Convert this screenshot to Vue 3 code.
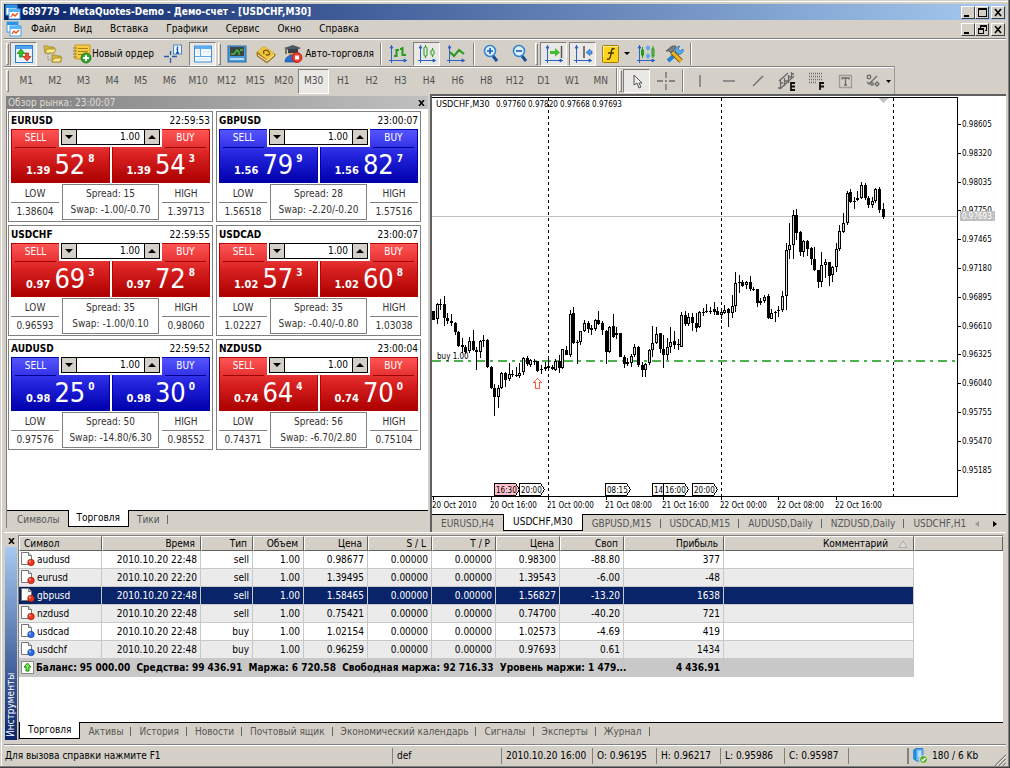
<script setup>
import { ref } from 'vue'

const menus = ['Файл', 'Вид', 'Вставка', 'Графики', 'Сервис', 'Окно', 'Справка']
const frames = ['M1', 'M2', 'M3', 'M4', 'M5', 'M6', 'M10', 'M12', 'M15', 'M20', 'M30', 'H1', 'H2', 'H3', 'H4', 'H6', 'H8', 'H12', 'D1', 'W1', 'MN']
const frame = ref('M30')

const quotes = [
  { s: 'EURUSD', t: '22:59:53', c: 'red', sell: ['1.39', '52', '8'], buy: ['1.39', '54', '3'], low: '1.38604', high: '1.39713', spread: '15', swap: '-1.00/-0.70' },
  { s: 'GBPUSD', t: '23:00:07', c: 'blue', sell: ['1.56', '79', '9'], buy: ['1.56', '82', '7'], low: '1.56518', high: '1.57516', spread: '28', swap: '-2.20/-0.20' },
  { s: 'USDCHF', t: '22:59:55', c: 'red', sell: ['0.97', '69', '3'], buy: ['0.97', '72', '8'], low: '0.96593', high: '0.98060', spread: '35', swap: '-1.00/0.10' },
  { s: 'USDCAD', t: '23:00:07', c: 'red', sell: ['1.02', '57', '3'], buy: ['1.02', '60', '8'], low: '1.02227', high: '1.03038', spread: '35', swap: '-0.40/-0.80' },
  { s: 'AUDUSD', t: '22:59:52', c: 'blue', sell: ['0.98', '25', '0'], buy: ['0.98', '30', '0'], low: '0.97576', high: '0.98552', spread: '50', swap: '-14.80/6.30' },
  { s: 'NZDUSD', t: '23:00:04', c: 'red', sell: ['0.74', '64', '4'], buy: ['0.74', '70', '0'], low: '0.74371', high: '0.75104', spread: '56', swap: '-6.70/2.80' }
].map(q => ({ ...q, vol: ref('1.00') }))

// Bars as "high low bodyTop bodyBottom direction" in thirds of a pixel
const early = `122 150 122 150 b,98 163 102 146 w,86 120 102 104 b,78 167 102 143 b,128 163 143 153 b,133 167 153 160 b,156 195 160 186 b,182 232 186 229 b,204 250 226 232 b,225 252 232 246 b,200 250 212 242 w,180 242 212 240 b,230 300 240 246 b,210 265 213 246 w,195 232 210 212 b,208 293 210 290 b,287 358 292 355 b,343 437 355 382 b,345 415 355 382 w,305 358 308 355 w,305 352 308 330 b,280 332 313 328 w,300 322 312 314 b,292 322 314 316 b,280 325 308 318 w,262 315 265 305 w,258 287 265 283 b,268 292 270 284 w,268 284 272 274 b,272 305 274 302 b,285 312 297 301 b,275 303 290 297 w,262 300 287 293 w,286 300 291 298 b,268 302 272 300 w,256 308 272 293 b,236 298 238 295 w,228 256 240 254 b,120 260 132 255 w,110 222 130 220 b,210 282 215 220 w,183 225 184 216 w,150 185 158 184 w,153 190 158 178 b,165 196 174 180 b,146 182 150 176 w,124 165 150 162 b,152 195 160 180 b,180 282 182 246 b,167 250 170 246 w,133 203 168 200 b,172 208 188 194 w,188 262 190 260 b,255 293 260 283 b,264 288 277 282 b,252 292 258 278 w,222 260 230 256 w,228 290 230 286 b,276 320 284 300 b,278 320 282 300 w,236 284 240 280 w,168 260 220 240 w,172 222 192 220 w,188 250 190 236 b,196 293 238 256 b,205 270 230 254 w,170 250 216 230 w,184 237 212 224 b,208 240 222 226 b,126 232 135 230 w,122 167 135 163 b,128 167 140 162 w,130 182 140 158 b,130 186 158 175 b,124 174 126 170 w,113 138 126 128 b,102 130 122 124 b,112 132 122 124 b,95 135 118 126 b,112 135 122 134 b`
const late = `643 675 653 662 w,632 660 648 656 w,643 700 645 658 b,603 672 636 658 w,533 655 568 636 w,543 597 565 568 b,558 580 563 575 b,560 585 563 574 w,547 592 563 584 b,578 592 584 588 b,584 640 586 626 b,612 632 620 626 w,604 626 608 620 w,600 675 606 673 b,645 675 658 674 w,650 685 653 658 w,636 670 648 652 b,590 653 606 648 w,447 648 468 606 w,388 496 454 468 w,347 496 362 454 w,346 438 364 416 b,412 487 415 474 b,438 488 442 474 w,438 487 442 464 b,460 512 463 496 b,458 532 496 528 b,527 583 528 564 b,473 580 514 564 w,495 552 503 514 w,503 577 505 545 b,517 563 520 542 w,447 535 466 520 w,392 470 412 466 w,358 418 386 414 w,290 393 296 386 w,286 327 295 325 b,310 346 320 325 w,290 322 313 318 b,263 316 274 313 w,266 318 274 313 b,305 342 313 334 b,308 342 320 334 w,282 327 286 320 w,280 356 285 347 b,328 376 346 368 b`
const parse = (text, base, first) => text.split(',').map((row, n) => {
  const [h, l, t, b, d] = row.split(' ')
  const y = v => Math.round(Number(v) / 3 + base)
  return { x: Math.round(1 + 3.597 * (n + first)), h: y(h), l: y(l), t: y(t), b: Math.max(y(b), y(t) + 1), up: d === 'w' }
})
const candles = [...parse(early, 172, 0), ...parse(late, -4, 80)]

const prices = ['0.98605', '0.98320', '0.98035', '0.97750', '0.97465', '0.97180', '0.96895', '0.96610', '0.96325', '0.96040', '0.95755', '0.95470', '0.95185']
  .map((p, i) => ({ p, y: Math.round(27 + 28.8 * i) }))
const times = ['20 Oct 2010', '20 Oct 16:00', '21 Oct 00:00', '21 Oct 08:00', '21 Oct 16:00', '22 Oct 00:00', '22 Oct 08:00', '22 Oct 16:00']
  .map((t, i) => ({ t, x: Math.round(1 + 57.55 * i) }))
const flags = [
  { x: 62, t: '16:30', pink: true }, { x: 87, t: '20:00' }, { x: 173, t: '08:15' },
  { x: 220, t: '14' }, { x: 231, t: '16:00' }, { x: 260, t: '20:00' }
]

const marketTabs = ['Символы', 'Торговля', 'Тики']
const marketTab = ref('Торговля')
const chartTabs = ['EURUSD,H4', 'USDCHF,M30', 'GBPUSD,M15', 'USDCAD,M15', 'AUDUSD,Daily', 'NZDUSD,Daily', 'USDCHF,H1']
const chartTab = ref('USDCHF,M30')
const toolTabs = ['Торговля', 'Активы', 'История', 'Новости', 'Почтовый ящик', 'Экономический календарь', 'Сигналы', 'Эксперты', 'Журнал']
const toolTab = ref('Торговля')

const heads = ['Символ', 'Время', 'Тип', 'Объем', 'Цена', 'S / L', 'T / P', 'Цена', 'Своп', 'Прибыль', 'Комментарий', '']
const orders = [
  ['audusd', '2010.10.20 22:48', 'sell', '1.00', '0.98677', '0.00000', '0.00000', '0.98300', '-88.80', '377'],
  ['eurusd', '2010.10.20 22:20', 'sell', '1.00', '1.39495', '0.00000', '0.00000', '1.39543', '-6.00', '-48'],
  ['gbpusd', '2010.10.20 22:48', 'sell', '1.00', '1.58465', '0.00000', '0.00000', '1.56827', '-13.20', '1638'],
  ['nzdusd', '2010.10.20 22:48', 'sell', '1.00', '0.75421', '0.00000', '0.00000', '0.74700', '-40.20', '721'],
  ['usdcad', '2010.10.20 22:48', 'buy', '1.00', '1.02154', '0.00000', '0.00000', '1.02573', '-4.69', '419'],
  ['usdchf', '2010.10.20 22:48', 'buy', '1.00', '0.96259', '0.00000', '0.00000', '0.97693', '0.61', '1434']
]
const picked = ref(2)
</script>

<template>
  <main class="window">
    <header class="title">
      <svg class="logo" width="16" height="16" viewBox="0 0 16 16">
        <rect x="1" y="1" width="11" height="10" fill="#fff" stroke="#3fa0e8" /><rect x="1" y="1" width="11" height="3" fill="#2b93e6" />
        <rect x="4" y="5" width="11" height="10" fill="#fff" stroke="#3fa0e8" /><rect x="4" y="5" width="11" height="3" fill="#55b5f5" />
        <path d="M6 13l2-3 2 2 3-3" fill="none" stroke="#e8501e" stroke-width="1.3" />
      </svg>
      <h1>689779 - MetaQuotes-Demo - Демо-счет - [USDCHF,M30]</h1>
      <div class="sys">
        <button aria-label="Свернуть"><svg width="10" height="9"><path d="M1 7h5v2H1z" /></svg></button>
        <button aria-label="Развернуть"><svg width="10" height="9"><path d="M1 0h9v9H1zM2 2v6h7V2z" fill-rule="evenodd" /></svg></button>
        <button class="close" aria-label="Закрыть"><svg width="10" height="9"><path d="M2 1l6 7M8 1L2 8" stroke="#000" stroke-width="1.6" /></svg></button>
      </div>
    </header>

    <nav class="menu">
      <svg class="logo" width="16" height="16" viewBox="0 0 16 16">
        <rect x="1" y="1" width="11" height="10" fill="#fff" stroke="#3fa0e8" /><rect x="1" y="1" width="11" height="3" fill="#2b93e6" />
        <rect x="4" y="5" width="11" height="10" fill="#fff" stroke="#3fa0e8" /><rect x="4" y="5" width="11" height="3" fill="#55b5f5" />
        <path d="M6 13l2-3 2 2 3-3" fill="none" stroke="#e8501e" stroke-width="1.3" />
      </svg>
      <button v-for="m in menus" :key="m">{{ m }}</button>
      <div class="sys">
        <button aria-label="Свернуть окно"><svg width="10" height="9"><path d="M1 7h5v2H1z" /></svg></button>
        <button aria-label="Восстановить окно"><svg width="10" height="9"><path d="M3 0h7v6H8V5h1V2H4v1H3zM1 3h6v6H1zM2 5v3h4V5z" fill-rule="evenodd" /></svg></button>
        <button class="close" aria-label="Закрыть окно"><svg width="10" height="9"><path d="M2 1l6 7M8 1L2 8" stroke="#000" stroke-width="1.6" /></svg></button>
      </div>
    </nav>

    <div class="bar main-bar" role="toolbar">
      <i class="grip first"></i>
      <button class="tool on" aria-label="Обзор рынка"><svg width="20" height="20" viewBox="0 0 20 20"><rect x="1.5" y="1.5" width="17" height="17" fill="#e8f3fc" stroke="#2c7ed0" /><rect x="2" y="2" width="16" height="3" fill="#4ba3ee" /><path d="M7 5L3 9.5h2.500V13h3V9.500H11z" fill="#2fc32a" stroke="#16800f" stroke-width=".7" /><path d="M13 17l4-4.500h-2.500V9h-3v3.500H9z" fill="#f4502c" stroke="#b01c08" stroke-width=".7" /></svg></button>
      <button class="tool" aria-label="Навигатор"><svg width="20" height="20" viewBox="0 0 20 20"><path d="M5 8v8h5" fill="none" stroke="#888" stroke-dasharray="1 1" /><path d="M1 2h4l1 1h5v6H2z" fill="#d8b73c" stroke="#9c7c17" stroke-width=".7" /><path d="M2 9l2-4h9l-2 4z" fill="#fbe88c" stroke="#9c7c17" stroke-width=".7" /><path d="M9 11h4l1 1h4v6H9z" fill="#d8b73c" stroke="#9c7c17" stroke-width=".7" /><path d="M9 18l2-4h8l-2 4z" fill="#fbe88c" stroke="#9c7c17" stroke-width=".7" /></svg></button>
      <button class="tool order"><svg width="20" height="20" viewBox="0 0 20 20"><path d="M3 1h15v14H3z" fill="#f5cc42" stroke="#c79a1c" /><path d="M6 4.500h10M6 7.500h10M6 10.500h8" stroke="#a8821c" /><path d="M1 4h4M1 7h4M1 10h4M1 13h4" stroke="#9a8340" /><circle cx="14" cy="14" r="5" fill="#32a82c" stroke="#157010" stroke-width=".8" /><path d="M14 11v6M11 14h6" stroke="#fff" stroke-width="2" /></svg>Новый ордер</button>
      <button class="tool" aria-label="Окно данных"><svg width="20" height="20" viewBox="0 0 20 20"><path d="M6.500 7v4M6.500 14v5M0 12.500h5M8 12.500h5" stroke="#2858a8" stroke-width="1.300" /><rect x="9.500" y="1" width="8" height="9" fill="#eef6fe" stroke="#4286cc" /><path d="M13.500 2.500v1.500M12.500 5h1v4M12 9h3" stroke="#184c9c" stroke-width="1.300" fill="none" /></svg></button>
      <button class="tool on" aria-label="Инструменты"><svg width="20" height="20" viewBox="0 0 20 20"><rect x="1.500" y="2" width="17" height="16" fill="#f2f9fe" stroke="#3f8fda" /><rect x="2" y="2" width="16" height="3" fill="#59adf0" /><path d="M7.500 5v7M2 12.500h16" stroke="#62a8e0" /><path d="M4 7h3M4 9h2M10 8h6M4 15h10" stroke="#d8e6ef" /></svg></button>
      <i class="grip mid"></i>
      <button class="tool" aria-label="Тестер"><svg width="20" height="20" viewBox="0 0 20 20"><rect x="1" y="2" width="18" height="16" fill="#4c9cdd" stroke="#286aa4" /><rect x="3" y="3" width="14" height="9" fill="#3b4644" /><path d="M4 10l3 0 3-4 2 2 0 3M13 6h3" fill="none" stroke="#43cf32" stroke-width="1.300" /><path d="M3 15h14" stroke="#b9dcf5" stroke-width="2" /></svg></button>
      <button class="tool" aria-label="MetaEditor"><svg width="20" height="20" viewBox="0 0 20 20"><path d="M1 8l7-6 11 8-7 7z" fill="#f1c63c" stroke="#c9991f" stroke-width=".6" /><path d="M1 8v4l10 7 8-7v-2l-7 7z" fill="#b48312" stroke="#86600b" stroke-width=".6" /><path d="M2 11l9 6 7-6" stroke="#fff" stroke-width=".9" fill="none" /><path d="M8 10c-2-4 3-5 5-2 2 3-2 4-3 2" fill="none" stroke="#775508" stroke-width="1.300" /></svg></button>
      <button class="tool auto"><svg width="20" height="20" viewBox="0 0 20 20"><path d="M5 6c0 9 9 9 10 0z" fill="#c9995f" /><path d="M1 4l9-3 8 3-8 4z" fill="#505a62" /><path d="M5 5h10v4H5z" fill="#39424a" /><path d="M3 5v5" stroke="#5c5434" stroke-width="1.500" /><path d="M2 18c0-5 4-7 8-7 3 0 5 3 6 7z" fill="#2c70ce" stroke="#174789" stroke-width=".6" /><circle cx="14" cy="13.500" r="5" fill="#ed3c2b" stroke="#a90d06" stroke-width=".7" /><rect x="12" y="11.500" width="4" height="4" fill="#fff" /></svg>Авто-торговля</button>
      <i class="sep"></i>
      <button class="tool" aria-label="Бары"><svg width="20" height="20" viewBox="0 0 20 20"><g class="axes"><path d="M3.500 1v18M1 16.500h18" /><path d="M2 4l1.500-2L5 4zM16 15l2.500 1.500L16 18z" /></g><path d="M8.500 5v8M6 12h2M9 6h2M14.500 3v9M12 5h2M15 11h3" class="green" /></svg></button>
      <button class="tool on" aria-label="Свечи"><svg width="20" height="20" viewBox="0 0 20 20"><g class="axes"><path d="M3.500 1v18M1 16.500h18" /><path d="M2 4l1.500-2L5 4zM16 15l2.500 1.500L16 18z" /></g><path d="M8.500 1v2M8.500 12v2M15.500 4v2M15.500 11v2" class="green thin" /><rect x="7" y="3" width="3" height="9" rx="1" class="green thin" /><rect x="14" y="6" width="3" height="5" rx="1" class="green thin" /></svg></button>
      <button class="tool" aria-label="Линия"><svg width="20" height="20" viewBox="0 0 20 20"><g class="axes"><path d="M3.500 1v18M1 16.500h18" /><path d="M2 4l1.500-2L5 4zM16 15l2.500 1.500L16 18z" /></g><path d="M4 8l4 4 5-6 5 4" class="green" /></svg></button>
      <i class="sep"></i>
      <button class="tool" aria-label="Приблизить"><svg width="20" height="20" viewBox="0 0 20 20"><path d="M12 12l4 5" stroke="#174e98" stroke-width="3" /><circle cx="9" cy="7" r="5.500" fill="#dff0fd" stroke="#2f83d3" stroke-width="1.500" /><path d="M9 4v6M6 7h6" stroke="#1559b6" stroke-width="1.600" /></svg></button>
      <button class="tool" aria-label="Отдалить"><svg width="20" height="20" viewBox="0 0 20 20"><path d="M12 12l4 5" stroke="#174e98" stroke-width="3" /><circle cx="9" cy="7" r="5.500" fill="#dff0fd" stroke="#2f83d3" stroke-width="1.500" /><path d="M6 7h6" stroke="#1559b6" stroke-width="1.600" /></svg></button>
      <i class="grip mid"></i>
      <button class="tool on" aria-label="Автопрокрутка"><svg width="20" height="20" viewBox="0 0 20 20"><g class="axes"><path d="M3.500 1v18M1 16.500h18" /><path d="M2 4l1.500-2L5 4zM16 15l2.500 1.500L16 18z" /></g><path d="M17.500 2v12" stroke="#555" stroke-width="1.500" /><path d="M6 7h5V4l5 4.500-5 4V10H6z" fill="#44bd35" /></svg></button>
      <button class="tool on" aria-label="Сдвиг графика"><svg width="20" height="20" viewBox="0 0 20 20"><g class="axes"><path d="M3.500 1v18M1 16.500h18" /><path d="M2 4l1.500-2L5 4zM16 15l2.500 1.500L16 18z" /></g><path d="M11 2v12" stroke="#777" stroke-width="2" /><path d="M19 7h-2V5l-4 3.500 4 3V10h2z" fill="#5096e8" stroke="#2467bb" stroke-width=".6" /></svg></button>
      <button class="tool drop" aria-label="Индикаторы"><svg width="20" height="20" viewBox="0 0 20 20"><rect x="1.500" y="1.500" width="16" height="17" rx="1" fill="#ffd21e" stroke="#a47e00" /><path d="M2.500 13V2.500h14" fill="none" stroke="#fff2a0" /><path d="M13.500 5c-3-1.500-3 2-3.500 5s-1 6-4 5M7 9h6" fill="none" stroke="#473a00" stroke-width="1.500" /></svg><svg width="6" height="3"><path d="M0 0h6L3 3z" /></svg></button>
      <button class="tool" aria-label="Объёмы"><svg width="20" height="20" viewBox="0 0 20 20"><g class="axes"><path d="M3.500 1v18M1 16.500h18" /><path d="M2 4l1.500-2L5 4zM16 15l2.500 1.500L16 18z" /></g><path d="M6.500 3v11M17 2v12" class="green thin" /><rect x="5.500" y="6" width="2" height="5" class="green thin" /><rect x="16" y="5" width="2" height="7" class="green thin" /><path d="M12 1l2.500 3-2.500 3-2.500-3zM12 9l2.500 3-2.500 3-2.500-3z" fill="#5da8f2" /></svg></button>
      <button class="tool" aria-label="Настройки"><svg width="20" height="20" viewBox="0 0 20 20"><path d="M3 17l10-9" stroke="#2082d3" stroke-width="4" /><path d="M12 3a4 4 0 1 0 6 2l-3 2-2-2 2-3z" fill="#57b0f0" stroke="#1c68a7" stroke-width=".7" /><path d="M7 8l9 9" stroke="#855e0b" stroke-width="5" /><path d="M7 8l9 9" stroke="#edb52e" stroke-width="3" /><path d="M1 7l6-5h4L9 6 6 9 4 7z" fill="#777e83" stroke="#444" stroke-width=".7" /></svg></button>
      <i class="sep last"></i>
    </div>

    <div class="bar frame-bar">
      <i class="grip"></i>
      <div class="frames" role="toolbar">
        <button v-for="f in frames" :key="f" :class="{ on: f === frame }" @click="frame = f">{{ f }}</button>
      </div>
      <i class="sep tall"></i><i class="grip first"></i>
      <div class="draw" role="toolbar">
        <button class="tool on" aria-label="Курсор"><svg width="18" height="18"><path d="M6 3v10l3-2 2 5 2-1-2-4h3z" fill="#eee" stroke="#555" /></svg></button>
        <button class="tool" aria-label="Перекрестие"><svg width="20" height="20" class="ink"><path d="M10 1v6M10 13v6M1 10h6M13 10h6M9 10h2" /></svg></button>
        <i class="sep"></i>
        <button class="tool" aria-label="Вертикальная линия"><svg width="20" height="20" class="ink"><path d="M10 4v12" /></svg></button>
        <button class="tool" aria-label="Горизонтальная линия"><svg width="20" height="20" class="ink"><path d="M4 10h12" /></svg></button>
        <button class="tool" aria-label="Трендовая линия"><svg width="20" height="20" class="ink"><path d="M5 15L15 5" /></svg></button>
        <button class="tool" aria-label="Канал"><svg width="20" height="20" class="ink"><path d="M2 10L11 2M3 18L17 5" /><path d="M1 17h2M3.500 17V9M3 12h3M7.500 15V7M8 10h3M11.500 12V4M11 6h3M14.500 8V1M14 3h3" /><path d="M18 12h-4v7h4M14 15.500h4" class="dark" /></svg></button>
        <button class="tool" aria-label="Фибоначчи"><svg width="20" height="20" class="ink"><path d="M3 2.500h13M3 5.500h13M3 8.500h13M3 11.500h8" stroke-dasharray="1 1" /><path d="M18 12h-4v7M14 15.500h4" class="dark" /></svg></button>
        <button class="tool" aria-label="Текст"><svg width="20" height="20" class="ink"><path d="M4.500 4.500h12v12h-12z" stroke-dasharray="1 1" /><path d="M7 8.500V7h7v1.500M10.500 7v7M9 14h3" /></svg></button>
        <button class="tool drop" aria-label="Объекты"><svg width="20" height="20" class="ink"><circle cx="6" cy="6" r="1.800" /><path d="M4 11l2 2 8-8" /><path d="M14 11l2 2-2 2-2-2z" /><circle cx="9" cy="13" r="1.300" /></svg><svg width="5" height="3"><path d="M0 0h5L2.500 3z" /></svg></button>
      </div>
    </div>

    <div class="work">
      <section class="market">
        <header><h2>Обзор рынка: 23:00:07</h2><button aria-label="Закрыть обзор рынка"><svg width="7" height="6"><path d="M1 0l5 6M6 0L1 6" stroke="#000" stroke-width="1.500" /></svg></button></header>
        <div class="tiles">
          <article v-for="q in quotes" :key="q.s" class="tile">
            <div class="name"><b>{{ q.s }}</b><span>{{ q.t }}</span></div>
            <div class="deal" :class="q.c">
              <button><em>SELL</em><span class="price"><b>{{ q.sell[0] }}</b><big>{{ q.sell[1] }}</big><sup>{{ q.sell[2] }}</sup></span></button>
              <button><em>BUY</em><span class="price"><b>{{ q.buy[0] }}</b><big>{{ q.buy[1] }}</big><sup>{{ q.buy[2] }}</sup></span></button>
              <div class="volume">
                <button aria-label="Меньше"><svg width="8" height="4"><path d="M0 0h8L4 4z" /></svg></button>
                <input v-model="q.vol.value" :aria-label="'Объем ' + q.s">
                <button aria-label="Больше"><svg width="8" height="4"><path d="M0 4h8L4 0z" /></svg></button>
              </div>
            </div>
            <div class="info">
              <p><span>LOW</span><span>{{ q.low }}</span></p>
              <div><span>Spread: {{ q.spread }}</span><span>Swap: {{ q.swap }}</span></div>
              <p><span>HIGH</span><span>{{ q.high }}</span></p>
            </div>
          </article>
        </div>
        <nav class="tabs">
          <button v-for="t in marketTabs" :key="t" :class="{ cur: t === marketTab }" @click="marketTab = t">{{ t }}</button>
        </nav>
      </section>

      <section class="chart">
        <div class="canvas">
          <svg class="plot">
            <path d="M116.500 0V2000M289.500 0V2000M461.500 0V2000" stroke="#000" stroke-dasharray="3 3" />
            <path d="M0 118.500H2000" stroke="#c0c0c0" />
            <path d="M0 263H2000" class="level" />
            <path d="M446 0h10l-5 5z" fill="#c0c0c0" />
            <g v-for="c in candles" :key="c.x">
              <rect :x="c.x" :y="c.h" width="1" :height="c.l - c.h" />
              <rect :x="c.x - 1" :y="c.t" width="3" :height="c.b - c.t" />
              <rect v-if="c.up && c.b - c.t > 2" :x="c.x" :y="c.t + 1" width="1" :height="c.b - c.t - 2" fill="#ddd" />
            </g>
            <path d="M105.500 280.500l4 4h-2v6h-4v-6h-2z" fill="#fff" stroke="#ff5a3c" />
            <text x="4" y="9" class="pair">USDCHF,M30</text>
            <text x="64" y="9">0.97760 0.97820 0.97668 0.97693</text>
            <text x="5" y="261">buy 1.00</text>
            <g v-for="f in flags" :key="f.x">
              <path :d="`M${f.x}.500 400V385.500h21l4 6-4 6h-21`" :fill="f.pink ? '#ffc0cb' : '#fff'" stroke="#000" />
              <text :x="f.x + 2" y="395">{{ f.t }}</text>
            </g>
          </svg>
          <svg class="scale">
            <g v-for="p in prices" :key="p.p"><rect :y="p.y" width="3" height="1" /><text x="4" :y="p.y + 3">{{ p.p }}</text></g>
            <rect x="2" y="114" width="35" height="10" fill="#c0c0c0" /><text x="4" y="122" fill="#fff">0.97693</text>
          </svg>
          <svg class="times">
            <g v-for="t in times" :key="t.t"><rect :x="t.x" width="1" height="3" /><text :x="t.x - 1" y="11">{{ t.t }}</text></g>
          </svg>
        </div>
        <nav class="tabs wide">
          <button v-for="t in chartTabs" :key="t" :class="{ cur: t === chartTab }" @click="chartTab = t">{{ t }}</button>
          <span class="arrows"><button aria-label="Назад"><svg width="4" height="6"><path d="M4 0v6L0 3z" fill="#999" /></svg></button><button aria-label="Вперёд"><svg width="4" height="6"><path d="M0 0v6l4-3z" /></svg></button></span>
        </nav>
      </section>
    </div>

    <section class="toolbox">
      <aside><button aria-label="Закрыть инструменты"><svg width="7" height="6"><path d="M1 0l5 6M6 0L1 6" stroke="#000" stroke-width="1.500" /></svg></button><h2>Инструменты</h2></aside>
      <div class="pane">
        <div class="grid">
          <table>
            <colgroup><col class="c0"><col class="c1"><col class="c2"><col class="c3"><col class="c4"><col class="c4"><col class="c4"><col class="c4"><col class="c4"><col class="c5"><col class="c6"><col></colgroup>
            <thead><tr><th v-for="(h, i) in heads" :key="i">{{ h }}<svg v-if="i === 10" width="10" height="8"><path d="M1 7.500L5 1l4 6.500z" fill="#ddd" stroke="#999" stroke-width=".7" /></svg></th></tr></thead>
            <tbody>
              <tr v-for="(o, r) in orders" :key="o[0]" :class="{ sel: r === picked }" @click="picked = r">
                <td v-for="(v, i) in o" :key="i">
                  <svg v-if="i === 0" width="15" height="16" viewBox="0 0 15 16"><path d="M1.500 1.500h7l3 3v9h-10z" fill="#fff" stroke="#777" /><path d="M8.500 1.500v3h3" fill="#ddd" stroke="#777" /><circle cx="11" cy="11.500" r="3.300" :fill="o[2] === 'sell' ? '#ec3519' : '#2b6be0'" :stroke="o[2] === 'sell' ? '#8e1405' : '#123b91'" stroke-width=".6" /><circle cx="10" cy="10.500" r="1" fill="#fff" opacity=".6" /></svg>{{ v }}
                </td>
                <td></td><td class="void"></td>
              </tr>
              <tr class="sum">
                <td colspan="9"><svg width="13" height="13"><path d="M.5.5h12v12H.5z" fill="#fff" stroke="#888" /><path d="M6.500 2L10 6H8v4H5V6H3z" fill="#7be552" stroke="#138c0a" /></svg>Баланс: 95 000.00&nbsp; Средства: 99 436.91&nbsp; Маржа: 6 720.58&nbsp; Свободная маржа: 92 716.33&nbsp; Уровень маржи: 1 479...</td>
                <td>4 436.91</td><td></td><td class="void"></td>
              </tr>
            </tbody>
          </table>
        </div>
        <nav class="tabs">
          <button v-for="t in toolTabs" :key="t" :class="{ cur: t === toolTab }" @click="toolTab = t">{{ t }}</button>
        </nav>
      </div>
    </section>

    <footer>
      <span class="help">Для вызова справки нажмите F1</span>
      <span class="def">def</span>
      <span class="date">2010.10.20 16:00</span>
      <span>O: 0.96195</span><span>H: 0.96217</span><span>L: 0.95986</span><span>C: 0.95987</span><span class="blank"></span>
      <span class="net"><svg width="16" height="16"><path d="M1 2l3-2h7v13H4l-3-2z" fill="#2f8fe0" /><path d="M4 1h7v12H4z" fill="#6fc2fa" stroke="#1d6fbd" stroke-width=".7" /><path d="M6 4h3M6 6h3M6 8h3" stroke="#fff" /><circle cx="11.500" cy="11.500" r="4" fill="#59a924" stroke="#fff" stroke-width=".7" /><path d="M9.500 11.500l1.500 1.500 2.500-3" fill="none" stroke="#fff" stroke-width="1.300" /></svg>180 / 6 Kb</span>
      <svg class="size" width="12" height="12"><path d="M12 1L1 12M12 5l-7 7M12 9l-3 3" stroke="#808080" stroke-width="1.500" /><path d="M12 2L2 12M12 6l-6 6M12 10l-2 2" stroke="#fff" stroke-width=".7" /></svg>
    </footer>
  </main>
</template>

<style>
body { margin: 0; background: #d4d0c8; }
</style>

<style scoped>
* { box-sizing: border-box; }
.window { display: flex; flex-direction: column; height: 100vh; padding: 4px 4px 2px; background: #d4d0c8; color: #000; font: 10px/14px "DejaVu Sans Condensed", "DejaVu Sans", sans-serif; box-shadow: inset -1px -1px #404040, inset -2px -2px #808080, inset 1px 1px #d4d0c8, inset 2px 2px #fff; overflow: hidden; }
button { font: inherit; color: inherit; padding: 0; margin: 0; border: 0; background: none; display: flex; align-items: center; justify-content: center; white-space: nowrap; }
h1, h2, p { margin: 0; font: inherit; }
svg { display: block; flex: none; }
.title { display: flex; align-items: center; height: 16px; flex: none; background: linear-gradient(90deg, #0a246a, #a6caf0); color: #fff; }
.title h1 { font-weight: bold; flex: 1; white-space: nowrap; }
.logo { margin: 0 1px; }
.sys { display: flex; margin-left: auto; margin-right: 1px; }
.sys button { width: 14px; height: 13px; background: #d4d0c8; border: 1px solid; border-color: #fff #404040 #404040 #fff; }
.sys .close { margin-left: 2px; }
.menu { display: flex; align-items: center; height: 18px; flex: none; }
.menu > .logo { margin: 0 0 0 2px; }
.menu > button { padding: 0 9px; }
.bar { display: flex; align-items: center; flex: none; border-top: 1px solid #808080; box-shadow: inset 0 1px #fff; }
.main-bar { height: 28px; padding: 2px 0 0 2px; }
.frame-bar { height: 28px; padding: 1px 0 0 2px; align-self: flex-start; border-right: 1px solid #999; }
.grip { width: 3px; height: 22px; margin: 0 3px 0 0; border: 1px solid; border-color: #fff #808080 #808080 #fff; }
.grip.mid { margin: 0 2px 0 0; }
.grip.first { margin: 0 1px 0 0; }
.sep { width: 2px; height: 22px; border-left: 1px solid #808080; border-right: 1px solid #fff; margin: 0 2px; }
.tool { width: 27px; height: 24px; margin-right: 2px; flex: none; }
.on { background: #eae8e4; border: 1px solid; border-color: #808080 #fff #fff #808080; }
.order { width: 90px; gap: 0; }
.auto { width: 95px; gap: 2px; }
.drop { width: 34px; gap: 3px; margin-right: 0; }
.last { margin: 0; }
.axes path { fill: #2c62c4; stroke: #2c62c4; stroke-width: 1; }
.green { fill: none; stroke: #259a1d; stroke-width: 2; }
.green.thin { stroke-width: 1; }
.frames { display: flex; width: 603px; }
.frames button { flex: 1; height: 25px; color: #505050; }
.tall { height: 26px; margin: 0 1px; }
.draw { display: flex; align-items: center; }
.draw .sep { margin: 0 2px 0 1px; }
.ink path, .ink circle { fill: none; stroke: #6a6a6a; stroke-width: 1.3; }
.ink .dark { stroke: #111; stroke-width: 1.8; }

.work { display: flex; flex: 1; min-height: 0; }
.market { width: 422px; flex: none; display: flex; flex-direction: column; margin: 2px 2px 4px 2px; border-left: 1px solid #808080; }
.market header { display: flex; align-items: center; justify-content: space-between; height: 13px; background: linear-gradient(90deg, #808080, #c0c0c0); color: #e0ddd6; padding: 0 3px 0 1px; }
.market .tabs { padding-left: 2px; }
.tiles { flex: 1; min-height: 0; background: #fff; display: grid; grid-template-columns: 205px 205px; grid-auto-rows: 111px; gap: 3px; padding: 2px 1px; align-content: start; }
.tile { border: 1px solid #808080; padding: 1px 2px; display: flex; flex-direction: column; }
.name { display: flex; flex: none; justify-content: space-between; height: 16px; line-height: 15px; }
.deal { position: relative; flex: none; display: grid; grid-template-columns: 1fr 1fr; gap: 2px; height: 54px; color: #fff; }
.deal > button { display: flex; flex-direction: column; align-items: flex-start; justify-content: flex-start; border: 1px solid #b80000; background: linear-gradient(#ff5555, #d82020 50%, #ac0000); }
.blue > button { border-color: #0000a8; background: linear-gradient(#5555ff, #2222dc 50%, #0000ac); }
.deal em { font-style: normal; width: 41px; height: 18px; line-height: 16px; margin: 0 3px; border-bottom: 1px solid #a00000; }
.blue em { border-color: #000090; }
.deal > button:nth-child(2) { align-items: flex-end; }
.price { display: flex; justify-content: center; align-items: baseline; width: 100%; height: 34px; line-height: 34px; }
.price big { font-size: 27px; margin: 0 3px 0 4px; }
.price b { font-size: 11px; }
.price sup { font-size: 10px; font-weight: bold; align-self: flex-start; line-height: 22px; vertical-align: baseline; }
.volume { position: absolute; top: 0; left: 48px; right: 48px; height: 18px; background: #fff; padding: 0 2px 2px; display: flex; }
.volume button { width: 16px; background: #d4d0c8; border: 1px solid #000; }
.volume input { flex: 1; min-width: 0; border: solid #000; border-width: 1px 0; font: inherit; text-align: right; padding: 0 4px; outline: 0; border-radius: 0; }
.info { display: grid; grid-template-columns: 48px 1fr 48px; gap: 3px; flex: 1; padding-top: 1px; text-align: center; color: #333; }
.info span { display: block; height: 17px; line-height: 18px; white-space: nowrap; }
.info p span:first-child { border-bottom: 1px solid #808080; height: 19px; line-height: 20px; }
.info p span:last-child { height: 16px; }
.info div { border: 1px solid #808080; }
.info div span { height: 16px; }
.tabs { display: flex; flex: none; height: 18px; border-top: 1px solid #000; color: #555; background: #d4d0c8; }
.tabs > button { padding: 0 8px; height: 17px; position: relative; }
.wide > button { padding: 0 9px; }
.tabs > button:not(.cur)::after { content: ""; position: absolute; right: 0; top: 4px; height: 9px; border-right: 1px solid #666; }
.tabs > .cur { background: #fff; color: #000; border: 1px solid #000; border-top: 0; margin-top: -1px; }
.tabs > button:has(+ .cur)::after, .wide > button:has(+ .arrows)::after { border: 0; }

.chart { flex: 1; min-width: 0; display: flex; flex-direction: column; border: solid #606060; border-width: 2px 0 0 2px; }
.canvas { flex: 1; min-height: 0; background: #fff; display: grid; grid-template-columns: 1fr 48px; grid-template-rows: 1fr 17px; padding-top: 1px; }
.canvas svg { font-size: 8px; width: 100%; height: 100%; overflow: hidden; min-width: 0; min-height: 0; }
.canvas rect, .canvas path { shape-rendering: crispEdges; }
.canvas .pair { font-size: 9px; }
.level { stroke: #4db14d; stroke-width: 2; stroke-dasharray: 9 5 3 5; }
.plot { border: solid #000; border-width: 1px 1px 1px 0; }
.times { grid-column: 1 / 3; }
.arrows { margin-left: auto; display: flex; gap: 14px; padding-right: 10px; }

.toolbox { height: 212px; flex: none; display: flex; padding: 2px 3px 4px 0; border-top: 1px solid #fff; }
aside { width: 14px; display: flex; flex-direction: column; align-items: center; }
aside button { height: 12px; }
aside h2 { width: 12px; flex: 1; color: #fff; line-height: 12px; writing-mode: vertical-rl; transform: rotate(180deg); background: linear-gradient(#0a246a, #a6caf0); white-space: nowrap; padding: 3px 0; }
.pane { flex: 1; min-width: 0; display: flex; flex-direction: column; border-left: 1px solid #808080; border-top: 1px solid #808080; }
.grid { flex: 1; min-height: 0; overflow: hidden; background: #fff; }
table { width: 100%; border-collapse: separate; border-spacing: 0; table-layout: fixed; }
.c0 { width: 83px; } .c1 { width: 99px; } .c2 { width: 52px; } .c3 { width: 51px; } .c4 { width: 64px; } .c5 { width: 100px; } .c6 { width: 190px; }
th { height: 15px; padding: 0 5px; font-weight: normal; line-height: 13px; text-align: right; background: #d4d0c8; border: 1px solid; border-color: #fff #606060 #606060 #fff; }
th:first-child { text-align: left; padding-left: 4px; }
th svg { display: inline-block; margin-left: 10px; vertical-align: -1px; }
td { height: 18px; padding: 0 3px; line-height: 17px; text-align: right; border-right: 1px solid #c8c8c8; border-bottom: 1px solid #c8c8c8; white-space: nowrap; }
td:first-child { text-align: left; padding: 0 1px; }
td:first-child svg { display: inline-block; vertical-align: top; margin-right: 2px; }
tr:nth-child(even) td { background: #ebebeb; }
tr.sel td { background: #0a246a; color: #fff; }
tr.sum td { background: #c8c8c8; font-weight: bold; border-right-color: #c8c8c8; }
tr.sum td:first-child svg { margin: 2px 2px 0 1px; }
tbody tr td.void { background: #fff; border: 0; }
footer { display: flex; align-items: center; height: 22px; flex: none; border-top: 1px solid #808080; box-shadow: inset 0 1px #fff; white-space: nowrap; }
footer span { height: 16px; line-height: 16px; width: 64px; padding-left: 4px; border-left: 1px solid #808080; }
footer .help { flex: 1; border: 0; padding-left: 1px; }
footer .def { width: 109px; }
footer .date { width: 91px; }
footer .blank { width: 59px; }
footer .net { display: flex; gap: 4px; width: 87px; border-left-width: 2px; padding-left: 3px; }
.size { align-self: flex-end; }
</style>
